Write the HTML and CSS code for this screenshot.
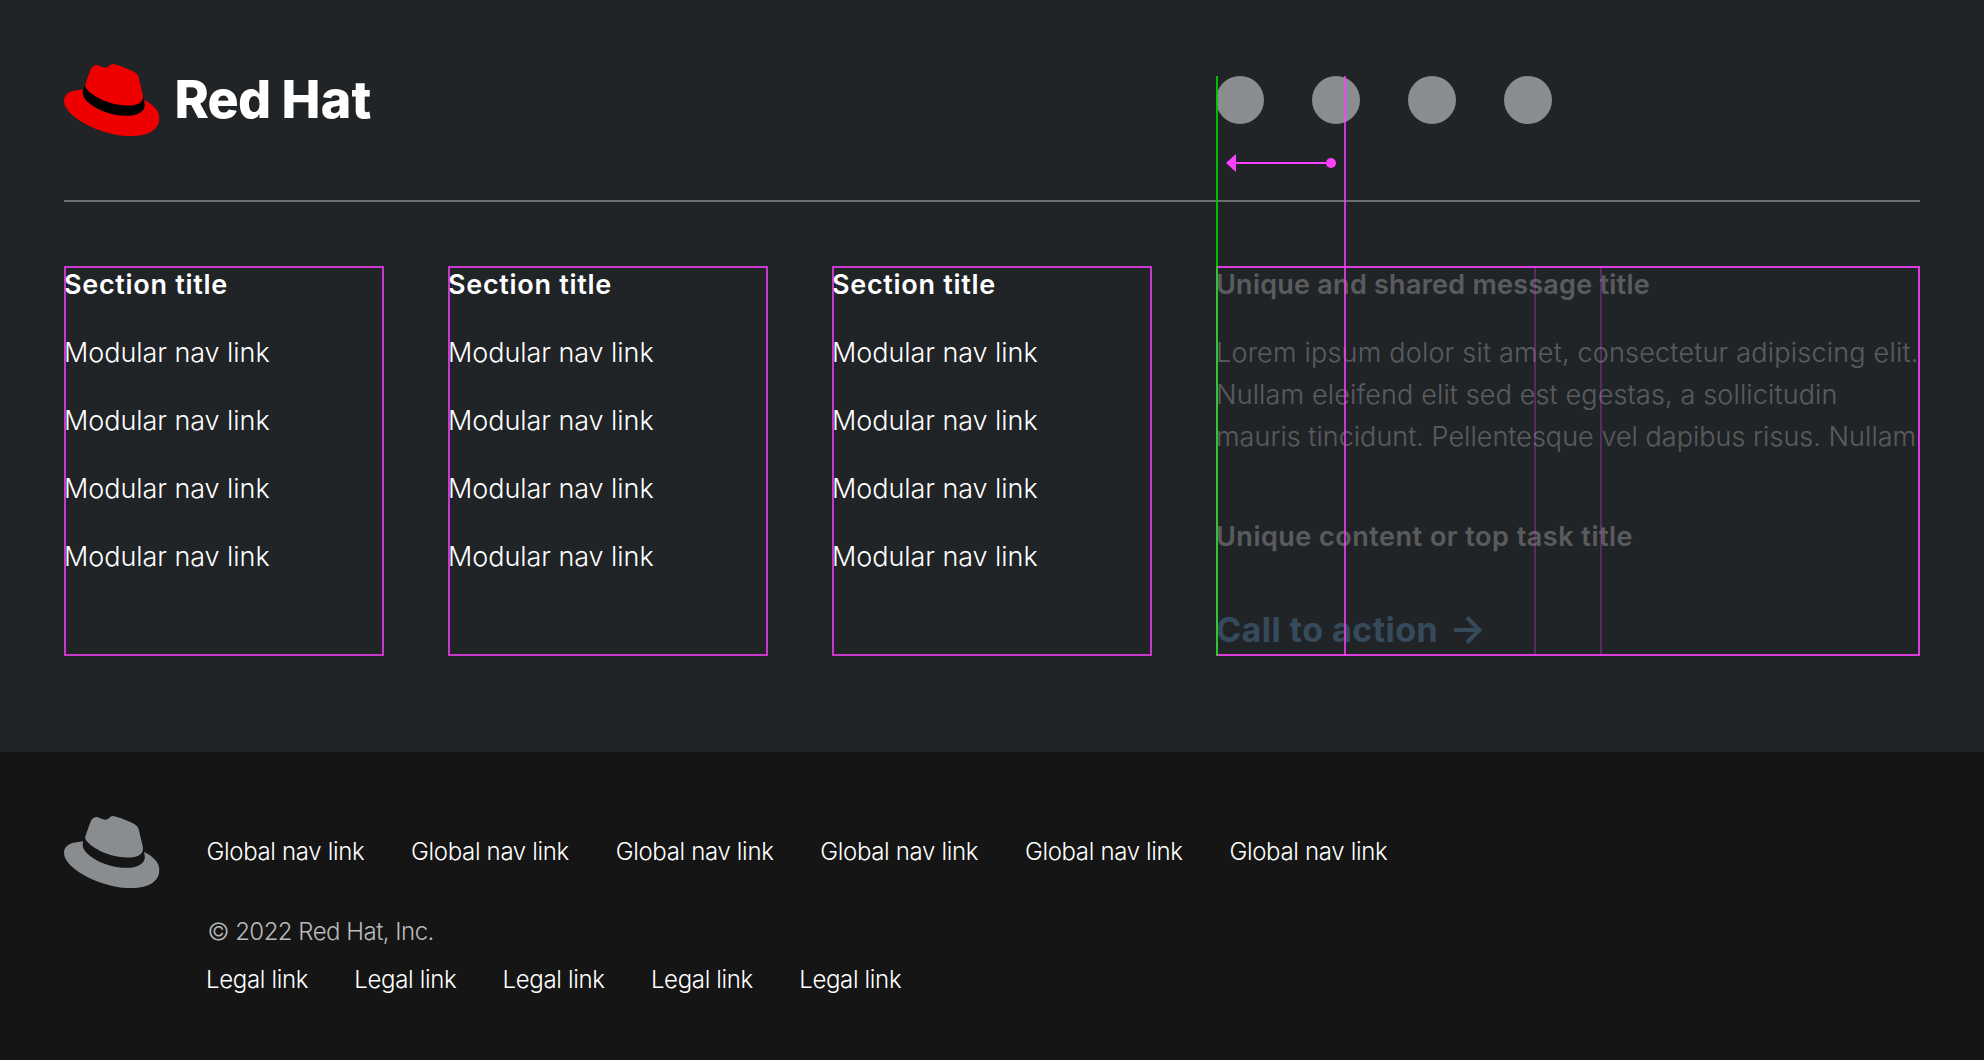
FILE: index.html
```html
<!DOCTYPE html>
<html lang="en">
<head>
<meta charset="utf-8">
<title>Red Hat footer</title>
<link rel="stylesheet" href="styles.css">
</head>
<body>
<svg class="defs" width="0" height="0">
  <symbol id="hat" viewBox="0 2.922 24 18.156">
    <path class="band" d="M20.11 11.951c.218 1.032.218 1.14.218 1.277 0 1.765-1.984 2.745-4.593 2.745-5.895.004-11.06-3.451-11.06-5.734a2.326 2.326 0 0 1 .19-.925L5.3 8.1l14.56 2.8z"/>
    <path d="M16.009 13.386c1.577 0 3.86-.326 3.86-2.202a1.765 1.765 0 0 0-.04-.431l-.94-4.08c-.216-.898-.406-1.305-1.982-2.093-1.223-.625-3.888-1.658-4.676-1.658-.733 0-.947.946-1.822.946-.842 0-1.467-.706-2.255-.706-.757 0-1.25.515-1.63 1.576 0 0-1.06 2.99-1.197 3.424a.81.81 0 0 0-.028.245c0 1.162 4.577 4.974 10.71 4.974m4.101-1.435c.218 1.032.218 1.14.218 1.277 0 1.765-1.984 2.745-4.593 2.745-5.895.004-11.06-3.451-11.06-5.734a2.326 2.326 0 0 1 .19-.925C2.746 9.415 0 9.794 0 12.217c0 3.969 9.405 8.861 16.851 8.861 5.71 0 7.149-2.582 7.149-4.62 0-1.605-1.387-3.425-3.887-4.512"/>
  </symbol>
</svg>
<footer>
  <section class="primary">
    <header class="brand-row">
      <div class="brand">
        <svg class="hat hat-red"><use href="#hat"/></svg>
        <span class="wordmark">Red <span class="wide">Hat</span></span>
      </div>
      <div class="social"><i></i><i></i><i></i><i></i></div>
    </header>
    <div class="columns">
      <nav class="column"><h2>Section title</h2><a>Modular nav link</a><a>Modular nav link</a><a>Modular nav link</a><a>Modular nav link</a></nav>
      <nav class="column"><h2>Section title</h2><a>Modular nav link</a><a>Modular nav link</a><a>Modular nav link</a><a>Modular nav link</a></nav>
      <nav class="column"><h2>Section title</h2><a>Modular nav link</a><a>Modular nav link</a><a>Modular nav link</a><a>Modular nav link</a></nav>
      <div class="column message">
        <div class="faded">
          <h2 class="t1">Unique and shared message title</h2>
          <p><span class="l1">Lorem ipsum dolor sit amet, consectetur adipiscing elit.</span><span class="l2">Nullam eleifend elit sed est egestas, a sollicitudin</span><span class="l3">mauris tincidunt. Pellentesque vel dapibus risus. Nullam</span></p>
          <h2 class="t2">Unique content or top task title</h2>
          <div class="cta"><span>Call to action</span><svg width="28" height="28" viewBox="0 0 28 28"><path d="M0 14h25M13 1.5 25.5 14 13 26.5"/></svg></div>
        </div>
        <b class="guide dim g1"></b><b class="guide dim g2"></b>
      </div>
    </div>
    <b class="guide green"></b><b class="guide pink"></b>
    <svg class="arrow" width="110" height="18" viewBox="0 0 110 18"><path d="M0 9 10 0v18zM10 8h95v2H10z"/><circle cx="105" cy="9" r="5"/></svg>
  </section>
  <section class="global">
    <svg class="hat hat-gray"><use href="#hat"/></svg>
    <div class="links">
      <nav class="nav"><a>Global nav link</a><a>Global nav link</a><a>Global nav link</a><a>Global nav link</a><a>Global nav link</a><a>Global nav link</a></nav>
      <div class="copy">© 2022 Red Hat, Inc.</div>
      <nav class="legal"><a>Legal link</a><a>Legal link</a><a>Legal link</a><a>Legal link</a><a>Legal link</a></nav>
    </div>
  </section>
</footer>
</body>
</html>
```
FILE: styles.css
```css
* { box-sizing: border-box; }
body {
  margin: 0;
  font-family: Inter, "Open Sans", sans-serif;
  font-weight: 300;
  color: #fff;
  background: #151515;
}
a, span { white-space: nowrap; }
.defs { position: absolute; }
.primary {
  position: relative;
  height: 752px;
  padding: 64px 64px 0;
  background: #212427;
}
.brand-row {
  display: grid;
  grid-template-columns: 1152px 1fr;
  height: 138px;
  border-bottom: 2px solid #6a6e73;
}
.brand { display: flex; gap: 15px; }
.hat { width: 95.5px; height: 72.2px; flex: none; display: block; }
.hat-red { fill: #e00; color: #000; }
.hat-gray { fill: #8a8d90; color: transparent; }
.band { fill: currentColor; }
.wordmark {
  font-size: 52px;
  font-weight: 800;
  line-height: 72px;
  letter-spacing: -.8px;
  word-spacing: .5px;
}
.wide { letter-spacing: .3px; }
.social { display: flex; gap: 48px; padding-top: 12px; }
.social i { width: 48px; height: 48px; border-radius: 50%; background: #8a8d90; }
.columns {
  display: grid;
  grid-template-columns: 320px 320px 320px 704px;
  gap: 64px;
  padding-top: 64px;
}
.column {
  position: relative;
  display: flex;
  flex-direction: column;
  gap: 32px;
  height: 390px;
  padding-top: 1px;
  font-size: 27px;
  line-height: 36px;
  letter-spacing: -.06px;
}
.column::after {
  content: "";
  position: absolute;
  inset: 0;
  border: 2px solid rgba(255, 64, 255, .75);
}
.message::after { border-color: rgba(255, 64, 255, .85); }
h2 { margin: 0; font-size: 27px; font-weight: 600; line-height: 36px; letter-spacing: .7px; white-space: nowrap; }
.t1 { letter-spacing: .25px; }
.t2 { letter-spacing: .5px; }
.l1 { letter-spacing: .2px; }
.l2 { letter-spacing: .14px; }
.l3 { letter-spacing: .03px; }
.faded { opacity: .25; }
.faded p { margin: 29px 0 61px; line-height: 42px; }
.faded p span { display: block; }
.cta {
  display: flex;
  align-items: center;
  gap: 16px;
  margin-top: 54px;
  font-size: 34px;
  font-weight: 700;
  line-height: 42px;
  letter-spacing: .45px;
  color: #73bcf7;
}
.cta svg { fill: none; stroke: currentColor; stroke-width: 4; }
.guide { position: absolute; top: 76px; width: 2px; height: 580px; }
.green { left: 1216px; background: rgba(0, 204, 0, .9); }
.green::after {
  content: "";
  position: absolute;
  inset: 190px 0 0;
  background: #33c433;
}
.pink { left: 1344px; background: rgba(255, 64, 255, .75); }
.dim { top: 0; height: 390px; background: rgba(255, 64, 255, .25); }
.g1 { left: 318px; }
.g2 { left: 384px; }
.arrow { position: absolute; left: 1226px; top: 154px; fill: #ff40ff; }
.global { display: flex; gap: 47px; height: 308px; padding: 64px 64px 0; }
.links { font-size: 24px; line-height: 32px; letter-spacing: -.34px; }
.nav { display: grid; grid-template-columns: repeat(6, 204.6px); padding-top: 20px; }
.copy { margin: 48px 0 16px 1px; letter-spacing: -.52px; color: #b8bbbe; }
.legal { display: grid; grid-template-columns: repeat(5, 148.3px); margin-left: -.5px; }
```
